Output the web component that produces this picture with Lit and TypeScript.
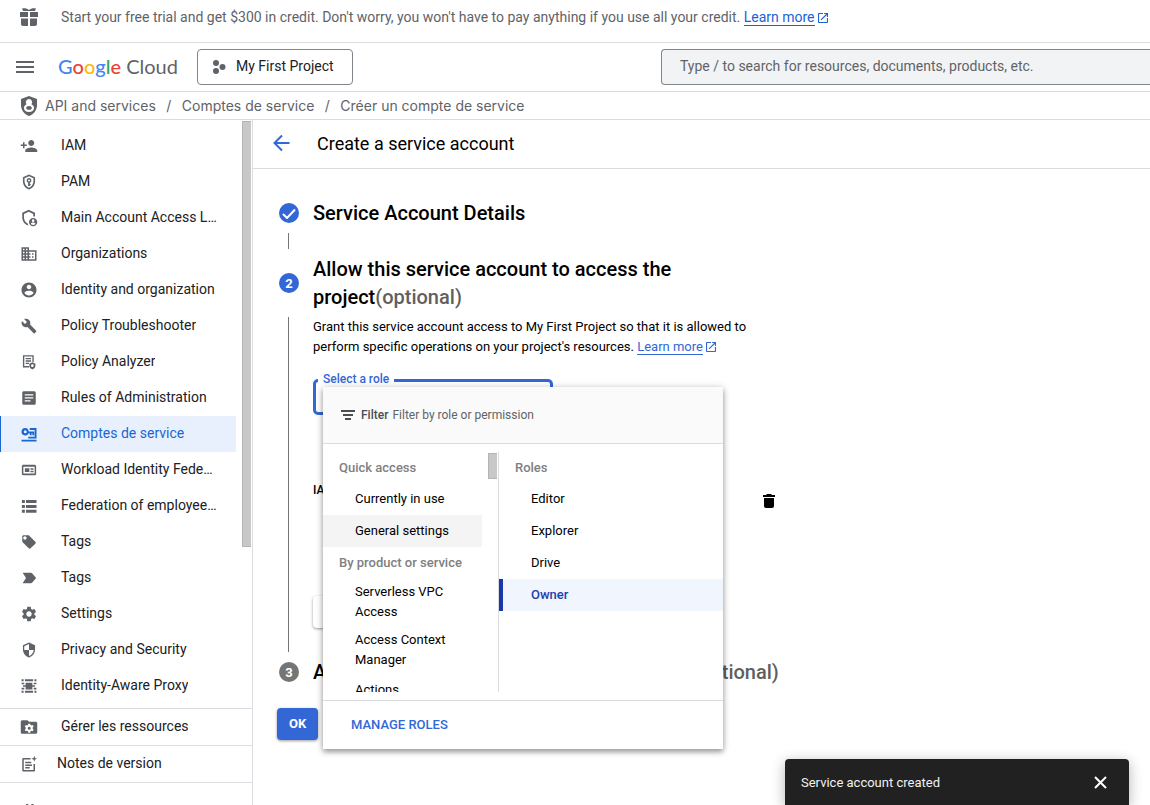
import { LitElement, html, css, svg } from "lit";
import { customElement, state } from "lit/decorators.js";

type Icon = keyof typeof ICONS;

const ICONS = {
  addPerson: svg`<path d="M15 12c2.2 0 4-1.8 4-4s-1.800-4-4-4-4 1.800-4 4 1.800 4 4 4zm-9-2V7H4v3H1v2h3v3h2v-3h3v-2H6zm9 4c-2.700 0-8 1.300-8 4v2h16v-2c0-2.700-5.300-4-8-4z"/>`,
  shieldKey: svg`<g transform="translate(1.200 1.200) scale(.9)"><path fill-rule="evenodd" d="M12 1 3 5v6c0 5.600 3.800 10.700 9 12 5.200-1.300 9-6.400 9-12V5l-9-4zm0 2.600 6.600 3V11c0 4.300-2.800 8.300-6.600 9.600C8.200 19.300 5.400 15.300 5.400 11V6.600l6.600-3z"/><path fill-rule="evenodd" d="M12 6a3.700 3.700 0 0 0-1.300 7.100V18h2.600v-1.200h1.200v-2h-1.200v-1.700A3.700 3.700 0 0 0 12 6zm0 2.300a1.400 1.400 0 1 1 0 2.800 1.400 1.400 0 0 1 0-2.800z"/></g>`,
  shieldPerson: svg`<path d="M11 22C6 20.500 3 16 3 11V5l8.500-4L20 5v5h-2.300V6.600l-6.200-3-6.200 3V11c0 4 2 7 5.200 8.600z"/><path fill-rule="evenodd" d="M17.500 12a5.500 5.500 0 1 0 0 11 5.500 5.500 0 0 0 0-11zm0 1.800a1.700 1.700 0 1 1 0 3.400 1.700 1.700 0 0 1 0-3.400zm0 7.500c-1.300 0-2.400-.6-3.100-1.600.1-1 2.100-1.600 3.100-1.600s3 .6 3.100 1.600c-.7 1-1.800 1.600-3.100 1.600z"/>`,
  domain: svg`<path d="M12 7V3H2v18h20V7H12zM6 19H4v-2h2v2zm0-4H4v-2h2v2zm0-4H4V9h2v2zm0-4H4V5h2v2zm4 12H8v-2h2v2zm0-4H8v-2h2v2zm0-4H8V9h2v2zm0-4H8V5h2v2zm10 12h-8v-2h2v-2h-2v-2h2v-2h-2V9h8v10zm-2-8h-2v2h2v-2zm0 4h-2v2h2v-2z"/>`,
  account: svg`<path d="M12 2C6.480 2 2 6.480 2 12s4.480 10 10 10 10-4.480 10-10S17.520 2 12 2zm0 3c1.660 0 3 1.340 3 3s-1.340 3-3 3-3-1.340-3-3 1.340-3 3-3zm0 14.200c-2.500 0-4.710-1.280-6-3.220.03-1.990 4-3.080 6-3.080 1.990 0 5.970 1.090 6 3.080-1.290 1.940-3.500 3.220-6 3.220z"/>`,
  wrench: svg`<g transform="translate(1.200 1.200) scale(.9)"><path d="M22.700 19l-9.100-9.100c.9-2.300.4-5-1.500-6.900-2-2-5-2.400-7.400-1.300L9 6 6 9 1.600 4.700C.4 7.100.9 10.100 2.900 12.100c1.900 1.900 4.600 2.400 6.900 1.500l9.100 9.100c.4.400 1 .4 1.400 0l2.300-2.300c.5-.4.5-1.100.1-1.400z"/></g>`,
  analyzer: svg`<g transform="translate(1.200 1.200) scale(.9)"><path d="M3 2h16v10h-2V4H5v14h7v2H3z"/><path d="M7 6h8v2H7zM7 9.500h8v2H7zM7 13h5v2H7z"/><path fill-rule="evenodd" d="M17 12.500l4.500 2v3.200c0 2.400-1.900 4.600-4.500 5.300-2.600-.7-4.500-2.900-4.500-5.300v-3.200zm0 3a2 2 0 1 0 0 4 2 2 0 0 0 0-4z"/></g>`,
  article: svg`<path fill-rule="evenodd" d="M5 3h14a2 2 0 0 1 2 2v14a2 2 0 0 1-2 2H5a2 2 0 0 1-2-2V5c0-1.100.9-2 2-2zm1.300 4v1.700h11.400V7zm0 4v1.700h11.400V11zm0 4v1.700H14V15z"/>`,
  serviceAccount: svg`<path fill-rule="evenodd" d="M7 4a5 5 0 1 0 4.600 7H13v2.500h2.500V11h1v2.500H19V8.500h-7.400A5 5 0 0 0 7 4zm0 3a2 2 0 1 1 0 4 2 2 0 0 1 0-4z"/><path d="M13 4h9v14H11v-2.500h8.500v-9H13zM2 19.500h20V22H2z"/>`,
  card: svg`<path fill-rule="evenodd" d="M4.500 5h15A2 2 0 0 1 21.500 7v10a2 2 0 0 1-2 2h-15a2 2 0 0 1-2-2V7c0-1.100.9-2 2-2zm0 2.500v9h15v-9zM6.500 9.500h6v5h-6zm7.500 0h4v2h-4zm0 3.500h4v2h-4z"/>`,
  list: svg`<path d="M2.500 4h4v4h-4zM8 4h14v4H8zM2.500 10.500h4v4h-4zM8 10.500h14v4H8zM2.500 17h4v4h-4zM8 17h14v4H8z"/>`,
  tag: svg`<g transform="translate(1.200 1.200) scale(.9)"><path d="M21.410 11.580l-9-9C12.050 2.220 11.550 2 11 2H4c-1.100 0-2 .9-2 2v7c0 .55.22 1.050.59 1.420l9 9c.36.36.86.58 1.410.58.550 0 1.050-.22 1.410-.59l7-7c.37-.36.59-.86.59-1.410 0-.55-.23-1.060-.59-1.420zM6 8.500C4.620 8.500 3.500 7.380 3.500 6S4.620 3.500 6 3.500 8.500 4.620 8.500 6 7.380 8.500 6 8.500z"/></g>`,
  label: svg`<path d="M3.500 19l4.500-7-4.500-7h11c.8 0 1.500.4 1.900 1L21.500 12l-5.100 6c-.4.600-1.100 1-1.900 1z"/>`,
  gear: svg`<path d="M19.140 12.940c.04-.3.06-.61.06-.94 0-.32-.02-.64-.07-.94l2.030-1.580c.18-.14.23-.41.12-.61l-1.920-3.320c-.12-.22-.37-.29-.59-.22l-2.390.96c-.5-.38-1.030-.7-1.620-.94L14.400 2.810c-.04-.24-.24-.41-.48-.41h-3.840c-.24 0-.43.17-.47.41L9.250 5.350C8.660 5.590 8.120 5.920 7.630 6.290L5.240 5.330c-.22-.08-.47 0-.59.22L2.740 8.870c-.12.21-.08.47.12.61l2.030 1.580C4.840 11.360 4.800 11.690 4.800 12s.02.64.07.94l-2.030 1.580c-.18.14-.23.41-.12.61l1.920 3.320c.12.22.37.29.59.22l2.390-.96c.5.38 1.030.7 1.620.94l.36 2.540c.05.24.24.41.48.41h3.840c.24 0 .44-.17.47-.41l.36-2.540c.59-.24 1.130-.56 1.620-.94l2.390.96c.22.08.47 0 .59-.22l1.920-3.320c.12-.22.07-.47-.12-.61L19.140 12.940zM12 15.600c-1.980 0-3.600-1.620-3.600-3.600s1.620-3.600 3.600-3.600 3.600 1.620 3.600 3.600-1.620 3.600-3.600 3.600z"/>`,
  shield: svg`<g transform="translate(1.200 1.200) scale(.9)"><path d="M12 1L3 5v6c0 5.550 3.840 10.740 9 12 5.160-1.260 9-6.450 9-12V5l-9-4zm0 10.990h7c-.53 4.120-3.280 7.790-7 8.940V12H5V6.300l7-3.110v8.800z"/></g>`,
  proxy: svg`<g transform="translate(1.200 1.200) scale(.9)"><path d="M1 2h3v3H1zM6 2h12v3H6zM20 2h3v3h-3zM1 19h3v3H1zM6 19h12v3H6zM20 19h3v3h-3zM7 7h10v10H7zM1 7h4v2.500H1zM1 14.500h4V17H1zM19 7h4v2.500h-4zM19 14.500h4V17h-4zM3 11h18v2H3z"/></g>`,
  folderGear: svg`<path fill-rule="evenodd" d="M3.500 3H10l2 2h9a2 2 0 0 1 2 2v12a2 2 0 0 1-2 2H3a2 2 0 0 1-2-2V5c0-1.100.9-2 2.500-2zM11 7.500l-.4 1.700-1.300.8-1.700-.6-1.200 2.200 1.300 1.200v1.400l-1.300 1.200 1.200 2.200 1.700-.6 1.300.8.4 1.700h2.600l.4-1.700 1.300-.8 1.700.6 1.200-2.200-1.300-1.200v-1.400l1.300-1.200-1.200-2.200-1.700.6-1.300-.8-.4-1.700zm1.300 4a2 2 0 1 1 0 4 2 2 0 0 1 0-4z"/>`,
  notes: svg`<path d="M4.500 4H14v2H5v14h13v-8h2v8.500c0 .8-.7 1.500-1.500 1.500h-14C3.700 22 3 21.300 3 20.500v-15C3 4.700 3.700 4 4.500 4z"/><path d="M7 9h8v2H7zM7 12.500h9v2H7zM7 16h6v2H7z"/><path d="M19 1l1 3 3 1-3 1-1 3-1-3-3-1 3-1z"/>`,
  collapse: svg`<path d="M8.500 4l-5 8 5 8h3l-5-8 5-8zM15.500 4l-5 8 5 8h3l-5-8 5-8z"/>`,
};

const icon = (name: Icon, size = 18) =>
  html`<svg viewBox="0 0 24 24" width=${size} height=${size} fill="currentColor" aria-hidden="true">${ICONS[name]}</svg>`;

const external = (size: number) =>
  html`<svg viewBox="3 3 18 18" width=${size} height=${size} fill="currentColor" aria-hidden="true"><path d="M19 19H5V5h7V3H5c-1.110 0-2 .9-2 2v14c0 1.100.89 2 2 2h14c1.100 0 2-.9 2-2v-7h-2v7zM14 3v2h3.590l-9.830 9.830 1.410 1.410L19 6.410V10h2V3h-7z"/></svg>`;

@customElement("cloud-nav")
export class CloudNav extends LitElement {
  static styles = css`
    :host { display: flex; flex-direction: column; width: 252px; flex: none; border-right: 1px solid #dadce0; overflow: hidden; }
    .scroll { display: flex; justify-content: space-between; flex: none; border-bottom: 1px solid #dadce0; padding-bottom: 4px; }
    .list { width: 236px; margin: 0; padding: 8px 0 0; list-style: none; }
    .thumb { box-sizing: border-box; width: 9px; height: 426px; margin: 1px 1px 0 0; background: #c8c8c8; border: 1px solid #b4b4b4; border-right: none; }
    .item { box-sizing: border-box; display: flex; align-items: center; gap: 23px; height: 36px; padding: 0 12px 0 20px; color: #202124; font-size: 14px; line-height: 20px; text-decoration: none; }
    .item svg { flex: none; color: #5f6368; }
    .text { margin-bottom: 2px; overflow: hidden; white-space: nowrap; text-overflow: ellipsis; }
    .active { background: #e8f0fe; color: #1967d2; box-shadow: inset 1px 0 #1967d2; }
    .active svg { color: #1967d2; }
    .foot { border-bottom: 1px solid #dadce0; }
    .near { gap: 19px; }
    .collapse { flex: none; display: flex; border: 0; background: none; padding: 18px 20px; color: #5f6368; }
  `;

  private items: [Icon, string][] = [
    ["addPerson", "IAM"],
    ["shieldKey", "PAM"],
    ["shieldPerson", "Main Account Access L…"],
    ["domain", "Organizations"],
    ["account", "Identity and organization"],
    ["wrench", "Policy Troubleshooter"],
    ["analyzer", "Policy Analyzer"],
    ["article", "Rules of Administration"],
    ["serviceAccount", "Comptes de service"],
    ["card", "Workload Identity Fede…"],
    ["list", "Federation of employee…"],
    ["tag", "Tags"],
    ["label", "Tags"],
    ["gear", "Settings"],
    ["shield", "Privacy and Security"],
    ["proxy", "Identity-Aware Proxy"],
  ];

  render() {
    return html`
      <div class="scroll">
        <ul class="list">
          ${this.items.map(
            ([name, text], i) => html`<li><a href="#" class="item ${i === 8 ? "active" : ""}">${icon(name)}<span class="text">${text}</span></a></li>`
          )}
        </ul>
        <div class="thumb"></div>
      </div>
      <div class="foot"><a href="#" class="item">${icon("folderGear")}<span class="text">Gérer les ressources</span></a></div>
      <div class="foot"><a href="#" class="item near">${icon("notes")}<span class="text">Notes de version</span></a></div>
      <button class="collapse" aria-label="Collapse menu">${icon("collapse")}</button>
    `;
  }
}

@customElement("role-menu")
export class RoleMenu extends LitElement {
  static styles = css`
    :host { display: block; width: 400px; background: #fff; box-shadow: 0 3px 5px rgba(0, 0, 0, 0.3), 0 1px 8px rgba(0, 0, 0, 0.2); font-size: 13px; line-height: 20px; color: #000; }
    .filter { display: flex; align-items: center; height: 56px; padding-left: 18px; background: #fafafa; border-bottom: 1px solid #dadce0; color: #5f6368; font-size: 12px; }
    .filter label { margin: 0 4px 0 6px; font-weight: 500; color: #4a4d51; }
    .filter input { flex: 1; border: 0; outline: 0; background: none; padding: 0; font: inherit; }
    .filter input::placeholder { color: #5f6368; opacity: 1; }
    .cols { display: flex; height: 240px; padding: 8px 0; }
    .left { display: flex; justify-content: space-between; width: 175px; overflow: hidden; border-right: 1px solid #dadce0; }
    .groups { width: 159px; }
    .right { flex: 1; }
    .thumb { box-sizing: border-box; width: 9px; height: 26px; margin: 1px 1px 0 0; background: #c8c8c8; border: 1px solid #b4b4b4; border-right: none; }
    .head { height: 31px; line-height: 31px; padding-left: 16px; font-size: 13px; font-weight: 500; color: #808080; margin: 0; }
    .opt { box-sizing: border-box; display: flex; align-items: center; width: 100%; min-height: 32px; padding: 4px 16px 4px 32px; border: 0; background: none; color: inherit; font: inherit; text-align: left; }
    .hover { background: #f4f4f4; }
    .picked { background: #f0f5fe; color: #1e3fae; font-weight: 500; box-shadow: inset 4px 0 #1a37a8; }
    .foot { display: flex; align-items: center; height: 48px; border-top: 1px solid #dadce0; padding-left: 28px; }
    .manage { border: 0; background: none; padding: 0; font: 500 13px/20px Roboto, sans-serif; color: #3367d6; }
  `;

  @state() private role = "Owner";

  render() {
    const opt = (text: string, cls = "") => html`<button class="opt ${cls}">${text}</button>`;
    return html`
      <div class="filter">
        <svg width="14" height="10" viewBox="0 0 14 10" fill="#4a4d51" aria-hidden="true"><path d="M0 0h14v2H0zM2 4h10v2H2zM4 8h6v2H4z"/></svg>
        <label for="q">Filter</label>
        <input id="q" placeholder="Filter by role or permission" />
      </div>
      <div class="cols">
        <div class="left">
          <div class="groups">
            <h3 class="head">Quick access</h3>
            ${opt("Currently in use")}${opt("General settings", "hover")}
            <h3 class="head">By product or service</h3>
            ${opt("Serverless VPC Access")}${opt("Access Context Manager")}${opt("Actions")}
          </div>
          <div class="thumb"></div>
        </div>
        <div class="right">
          <h3 class="head">Roles</h3>
          ${["Editor", "Explorer", "Drive", "Owner"].map(
            (r) => html`<button class="opt ${r === this.role ? "picked" : ""}" @click=${() => (this.role = r)}>${r}</button>`
          )}
        </div>
      </div>
      <div class="foot"><button class="manage">MANAGE ROLES</button></div>
    `;
  }
}

@customElement("app-root")
export class AppRoot extends LitElement {
  static styles = css`
    :host { position: relative; display: flex; flex-direction: column; height: 100vh; overflow: hidden; background: #fff; font-family: Roboto, sans-serif; color: #000; }
    a { text-decoration: none; }
    .banner { display: flex; flex: none; height: 42px; padding-left: 20px; border-bottom: 1px solid #dadce0; color: #5f6368; font-size: 14px; line-height: 20px; }
    .gift { flex: none; margin: 8px 23px 0 0; }
    .banner p { margin: 7px 0 0; }
    .learn { color: #1a62d8; }
    .learn span { border-bottom: 1px solid currentColor; }
    .learn svg { margin-left: 3px; vertical-align: -1px; }
    .top { display: flex; align-items: center; flex: none; height: 48px; border-bottom: 1px solid #dadce0; }
    .lead { display: flex; align-items: center; width: 661px; flex: none; }
    .burger { display: flex; flex: none; margin-left: 16px; padding: 0; border: 0; background: none; }
    .logo { width: 139px; margin-left: 24px; padding-bottom: 2px; font: 400 20px/24px Lato, sans-serif; color: #5f6368; }
    .b { color: #4285f4; } .r { color: #ea4335; } .y { color: #fbbc04; } .g { color: #34a853; }
    .google { font-weight: 500; }
    .project { box-sizing: border-box; display: flex; align-items: center; gap: 10px; height: 36px; padding: 0 18px 0 14px; border: 1px solid #80868b; border-radius: 4px; background: #fff; font: 14px/20px Roboto, sans-serif; color: #202124; }
    .project span { margin-bottom: 2px; }
    .search { box-sizing: border-box; flex: 1; min-width: 0; height: 36px; padding: 0 18px 2px; border: 1px solid #80868b; border-right: 0; border-radius: 4px 0 0 4px; background: #f1f3f4; font: 14px/20px Roboto, sans-serif; }
    .search::placeholder { color: #5f6368; opacity: 1; }
    .crumbs { display: flex; align-items: center; flex: none; height: 27px; padding-left: 20px; border-bottom: 1px solid #dadce0; font: 400 14px/20px Inter, sans-serif; color: #5f6368; }
    .crumbs a { color: inherit; }
    .crumbs svg { margin-right: 7px; }
    .sep { width: 26px; text-align: center; }
    .body { display: flex; flex: 1; min-height: 0; }
    .main { flex: 1; min-width: 0; }
    .title { display: flex; align-items: center; gap: 26px; height: 48px; padding-left: 20px; border-bottom: 1px solid #dadce0; }
    .title h1 { margin: 0; font-size: 18px; font-weight: 400; line-height: 24px; }
    .back { display: flex; border: 0; padding: 0 0 2px; background: none; }
    .steps { display: grid; grid-template-columns: 24px 1fr; column-gap: 12px; padding: 30px 0 0 24px; }
    .rail { display: flex; flex-direction: column; align-items: center; }
    .dot { display: flex; align-items: center; justify-content: center; flex: none; width: 20px; height: 20px; border-radius: 50%; background: #3367d6; color: #fff; font-size: 13px; font-weight: 700; }
    .one { margin-top: 4px; } .two { margin-top: 18px; } .three { margin-top: 4px; background: #757575; }
    .line { box-sizing: border-box; width: 2px; border-left: 1px solid #757575; }
    .short { height: 16px; margin: 10px 0 6px; }
    .long { flex: 1; margin: 24px 0 6px; }
    h2 { margin: 0; max-width: 480px; font-size: 20px; font-weight: 500; line-height: 28px; }
    .opt { color: #5f5f5f; }
    .content { max-width: 440px; height: 403px; }
    .content p { margin: 6px 0 22px; font-size: 13px; line-height: 20px; }
    .content .learn { color: #3367d6; }
    .field { position: relative; width: 240px; }
    .select { box-sizing: border-box; display: block; width: 240px; height: 36px; border: 3px solid #3367d6; border-radius: 5px; background: #fff; appearance: none; }
    .field label { position: absolute; left: 5px; top: -8px; padding: 0 5px; background: #fff; color: #3367d6; font-size: 12px; font-weight: 500; line-height: 16px; }
    .menu { position: absolute; left: 10px; top: 8px; z-index: 2; }
    .cond { display: flex; justify-content: space-between; width: 466px; margin-top: 67px; }
    .cond h3 { margin: 0; font-size: 12px; font-weight: 500; line-height: 16px; }
    .trash { display: flex; margin: 12px 4px 0 0; border: 0; padding: 0; background: none; }
    .add { height: 32px; margin-top: 88px; padding: 0 16px; border: 0; border-radius: 4px; background: #fff; box-shadow: 0 1px 3px rgba(0, 0, 0, 0.4); color: #3367d6; font: 500 13px/20px Roboto, sans-serif; }
    .ok { height: 32px; margin: 22px 0 0 24px; padding: 0 12px; border: 0; border-radius: 4px; background: #3367d6; box-shadow: 0 1px 3px rgba(0, 0, 0, 0.4); color: #fff; font: 700 13px/20px Roboto, sans-serif; }
    .toast { position: absolute; right: 21px; bottom: 0; z-index: 3; box-sizing: border-box; display: flex; align-items: center; justify-content: space-between; width: 344px; height: 46px; padding: 1px 22px 0 16px; border-radius: 4px 4px 0 0; background: #212121; box-shadow: 0 3px 14px rgba(0, 0, 0, 0.3); color: #f1f1f1; font-size: 13px; line-height: 20px; }
    .close { display: flex; padding: 0; border: 0; background: none; }
  `;

  @state() private toast = true;

  render() {
    return html`
      <div class="banner">
        <svg class="gift" width="18" height="19" viewBox="0 0 18 19" fill="#5f6368" aria-hidden="true"><path d="M2 .5C4 0 7 0 9 2c2-2 5-2 7-1.500L15 3H3zM0 4h8v5H0zM10 4h8v5h-8zM1 10.500h7V18H3c-1.200 0-2-.8-2-2zM10 10.500h7V16c0 1.200-.8 2-2 2h-5z"/></svg>
        <p>Start your free trial and get $300 in credit. Don't worry, you won't have to pay anything if you use all your credit. <a class="learn" href="#"><span>Learn more</span>${external(10)}</a></p>
      </div>
      <header class="top">
        <div class="lead">
          <button class="burger" aria-label="Menu"><svg width="18" height="12" viewBox="0 0 18 12" fill="#5f6368"><path d="M0 0h18v2H0zM0 5h18v2H0zM0 10h18v2H0z"/></svg></button>
          <div class="logo"><span class="google"><span class="b">G</span><span class="r">o</span><span class="y">o</span><span class="b">g</span><span class="g">l</span><span class="r">e</span></span> Cloud</div>
          <button class="project"><svg width="14" height="14" viewBox="0 0 14 14" fill="#5f6368" aria-hidden="true"><circle cx="4" cy="3" r="3"/><circle cx="4" cy="11" r="3"/><circle cx="10.500" cy="7" r="3"/></svg><span>My First Project</span></button>
        </div>
        <input class="search" aria-label="Search" placeholder="Type / to search for resources, documents, products, etc." />
      </header>
      <nav class="crumbs">
        <svg width="18" height="20" viewBox="0 0 18 20" aria-hidden="true"><path fill="#5f6368" d="M9 0l8 3v6c0 5-3 9-8 11-5-2-8-6-8-11V3z"/><path fill="#fff" fill-rule="evenodd" d="M9 3a3.200 3.200 0 0 1 2.400 5.300C13 9 14 10.300 14 12c0 2.500-2.200 4-5 4s-5-1.500-5-4c0-1.700 1-3 2.600-3.700A3.200 3.200 0 0 1 9 3zm0 7c-1.800 0-2.800.9-2.800 1.900S7.200 13.800 9 13.800s2.800-.9 2.800-1.900S10.800 10 9 10z"/></svg>
        <a href="#">API and services</a><span class="sep">/</span><a href="#">Comptes de service</a><span class="sep">/</span><span>Créer un compte de service</span>
      </nav>
      <div class="body">
        <cloud-nav></cloud-nav>
        <main class="main">
          <div class="title">
            <button class="back" aria-label="Back"><svg width="18" height="18" viewBox="0 0 18 18" fill="none" stroke="#3367d6" stroke-width="2"><path d="M16.500 9H2M9 1.500 1.500 9 9 16.500"/></svg></button>
            <h1>Create a service account</h1>
          </div>
          <div class="steps">
            <div class="rail">
              <span class="dot one"><svg width="14" height="11" viewBox="0 0 14 11" fill="none" stroke="#fff" stroke-width="2"><path d="M1 6l4 4 8-8.500"/></svg></span>
              <span class="line short"></span>
            </div>
            <h2>Service Account Details</h2>
            <div class="rail"><span class="dot two">2</span><span class="line long"></span></div>
            <div class="content">
              <h2>Allow this service account to access the project<span class="opt">(optional)</span></h2>
              <p>Grant this service account access to My First Project so that it is allowed to perform specific operations on your project's resources. <a class="learn" href="#"><span>Learn more</span>${external(10)}</a></p>
              <div class="field">
                <select class="select" id="role"></select>
                <label for="role">Select a role</label>
                <role-menu class="menu"></role-menu>
              </div>
              <div class="cond">
                <h3>IAM condition</h3>
                <button class="trash" aria-label="Delete role"><svg width="12" height="14" viewBox="0 0 12 14"><path d="M4 0h4l1 1h3v2H0V1h3zM1 4h10v8c0 1.200-.8 2-2 2H3c-1.200 0-2-.8-2-2z"/></svg></button>
              </div>
              <button class="add">+ ADD ANOTHER ROLE</button>
            </div>
            <div class="rail"><span class="dot three">3</span></div>
            <h2>Allow users to access this service account<span class="opt">(optional)</span></h2>
          </div>
          <button class="ok">OK</button>
        </main>
      </div>
      ${this.toast
        ? html`<div class="toast" role="status"><span>Service account created</span><button class="close" aria-label="Close" @click=${() => (this.toast = false)}><svg width="13" height="13" viewBox="0 0 13 13" stroke="#fff" stroke-width="2"><path d="M1 1l11 11M12 1 1 12"/></svg></button></div>`
        : ""}
    `;
  }
}
